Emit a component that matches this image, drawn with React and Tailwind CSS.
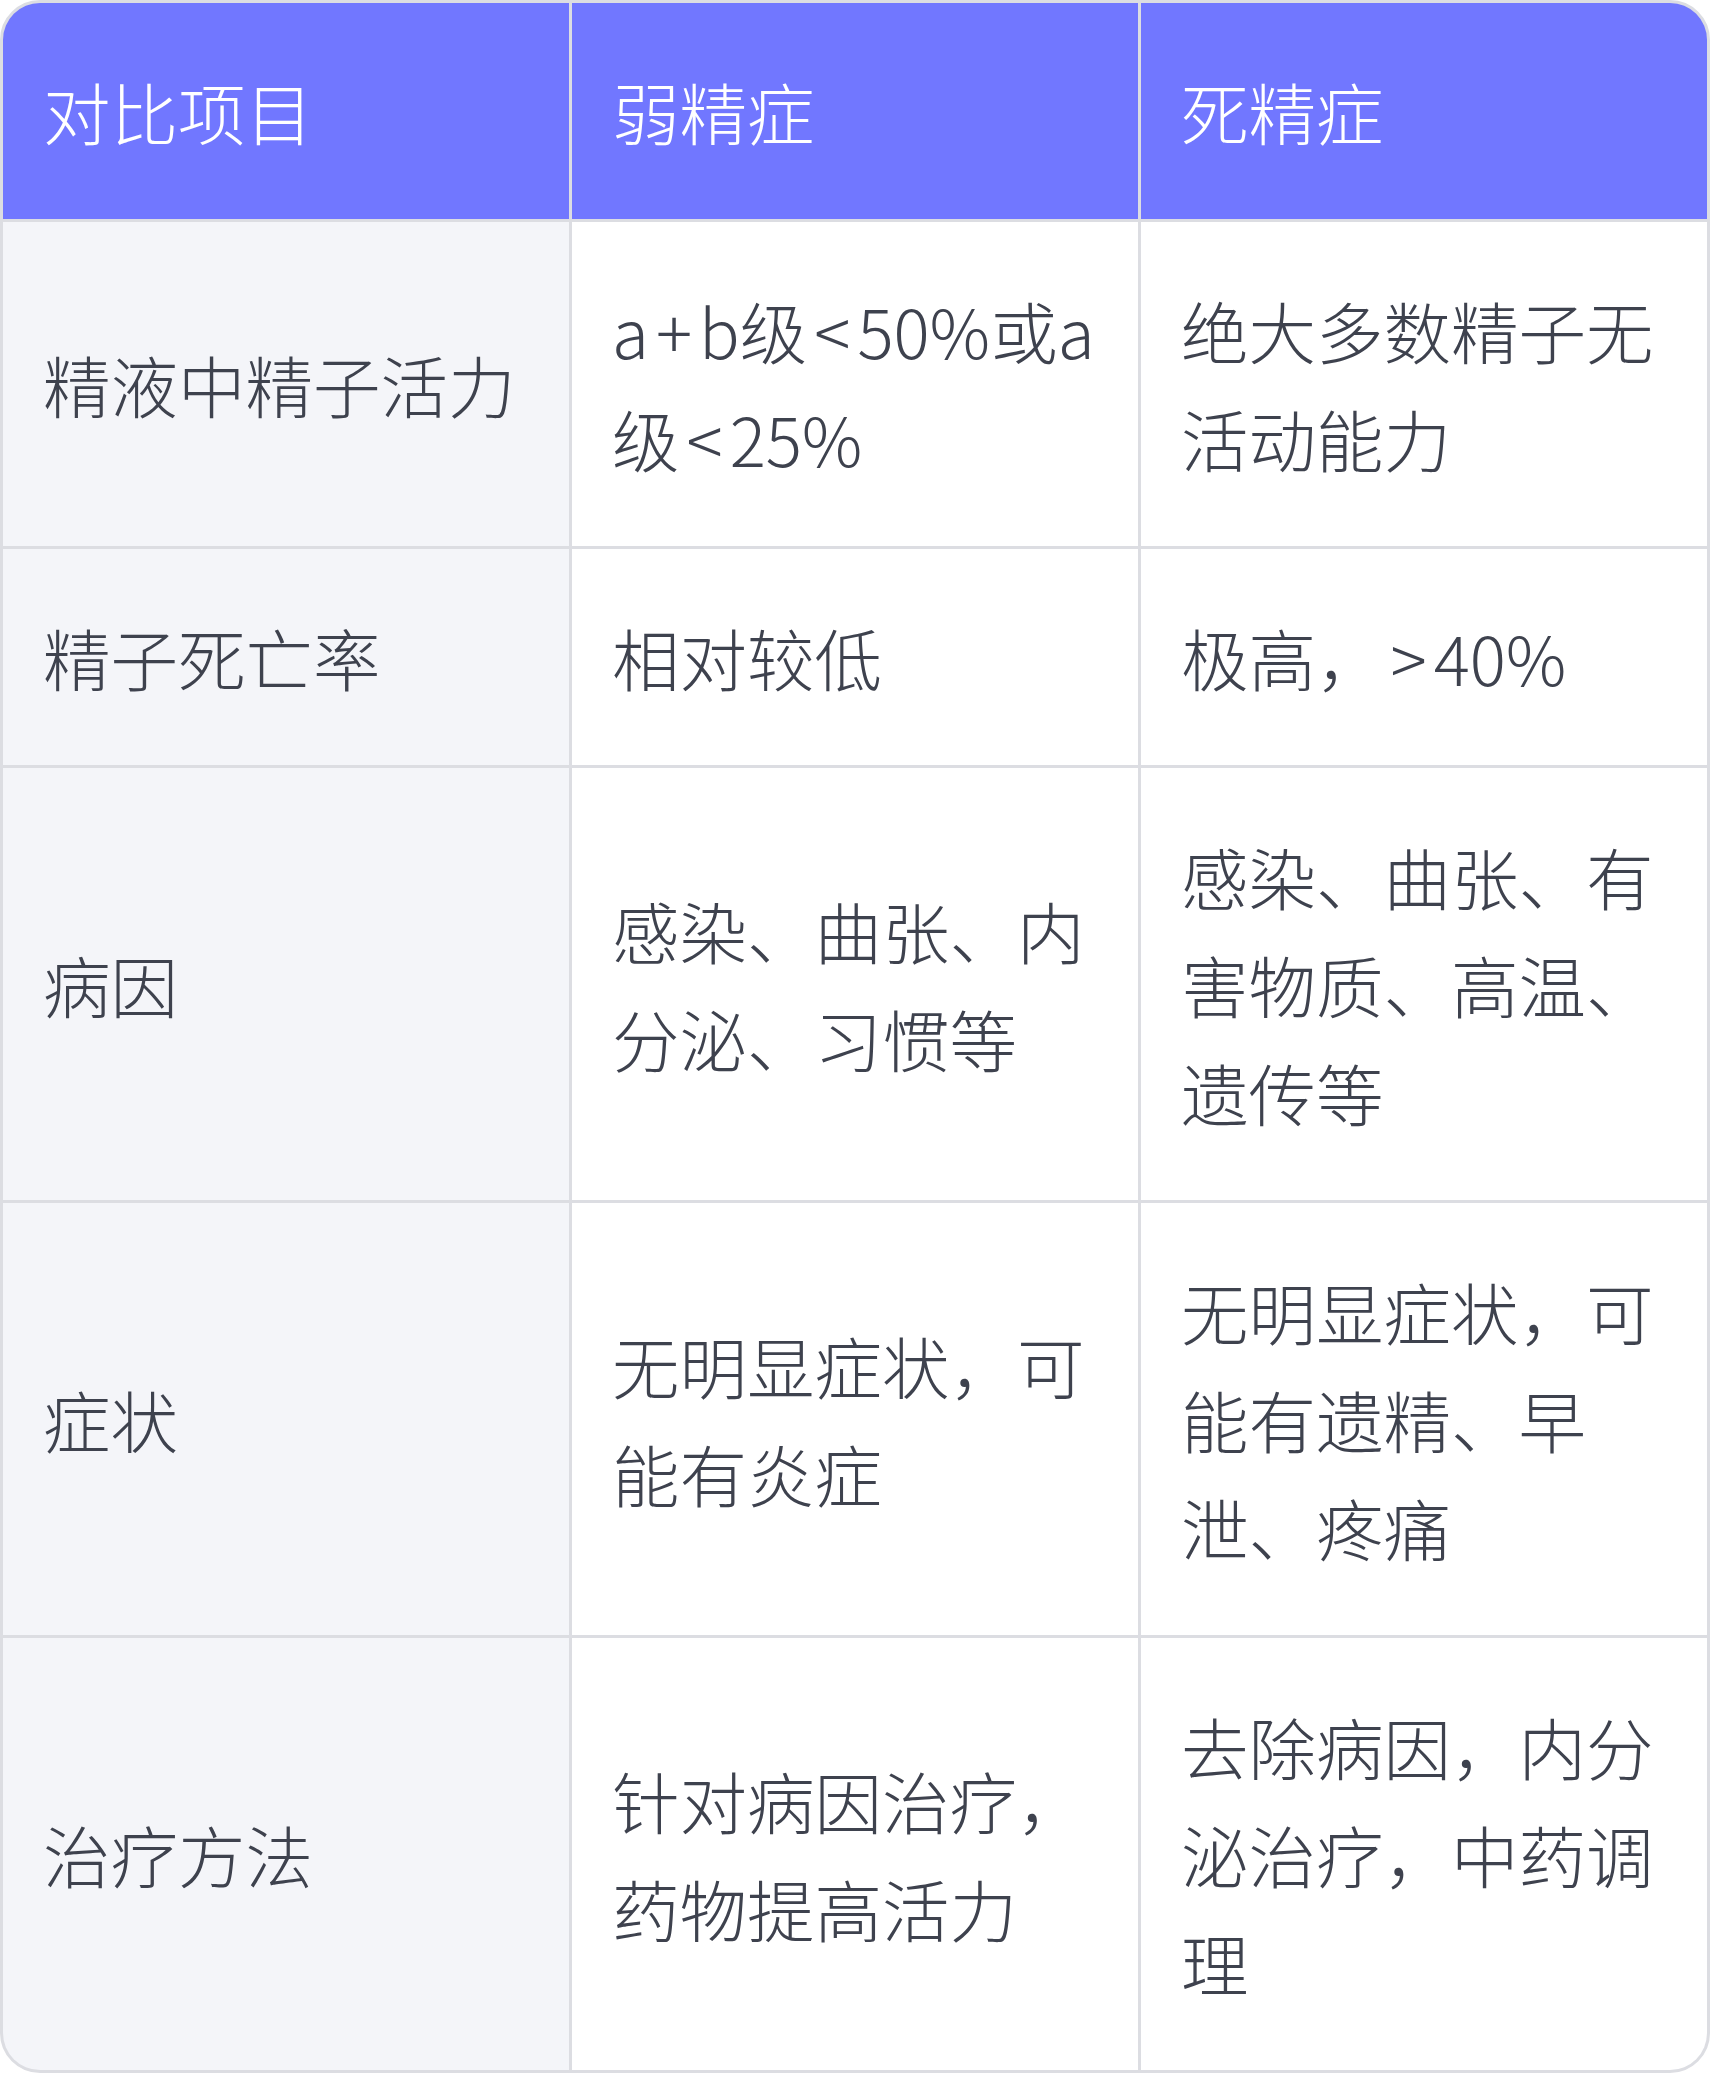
import React from "react";

const Sym = ({ c }) => <span className="mx-[7px]">{c}</span>;

const header = ["对比项目", "弱精症", "死精症"];
const rows = [
  [
    "精液中精子活力",
    <>
      <span className="block whitespace-nowrap">
        a<Sym c="+" />b级<Sym c="<" />50%或a
      </span>
      <span className="block whitespace-nowrap">
        级<Sym c="<" />25%
      </span>
    </>,
    "绝大多数精子无活动能力",
  ],
  ["精子死亡率", "相对较低", <>极高，<Sym c=">" />40%</>],
  ["病因", "感染、曲张、内分泌、习惯等", "感染、曲张、有害物质、高温、遗传等"],
  ["症状", "无明显症状，可能有炎症", "无明显症状，可能有遗精、早泄、疼痛"],
  ["治疗方法", "针对病因治疗，药物提高活力", "去除病因，内分泌治疗，中药调理"],
];

export default function App() {
  return (
    <div className="w-[1710px] bg-white font-['Noto_Sans_CJK_SC','Noto_Sans',sans-serif] font-light">
      <div className="grid grid-cols-3 gap-[3px] overflow-hidden rounded-[40px] border-[3px] border-[#dcdde2] bg-[#dcdde2] text-[67.5px] leading-[108px]">
        {header.map((h) => (
          <div key={h} className="flex items-center bg-[#7177ff] px-[40px] py-[54px] text-white">
            {h}
          </div>
        ))}
        {rows.map((r, i) => (
          <React.Fragment key={i}>
            <div className="flex items-center bg-[#f4f5f9] px-[40px] py-[54px] text-[#3e424e]">{r[0]}</div>
            <div className="flex items-center bg-white px-[40px] py-[54px] text-[#3e424e]">
              <div>{r[1]}</div>
            </div>
            <div className="flex items-center bg-white px-[40px] py-[54px] text-[#3e424e]">
              <div>{r[2]}</div>
            </div>
          </React.Fragment>
        ))}
      </div>
    </div>
  );
}
